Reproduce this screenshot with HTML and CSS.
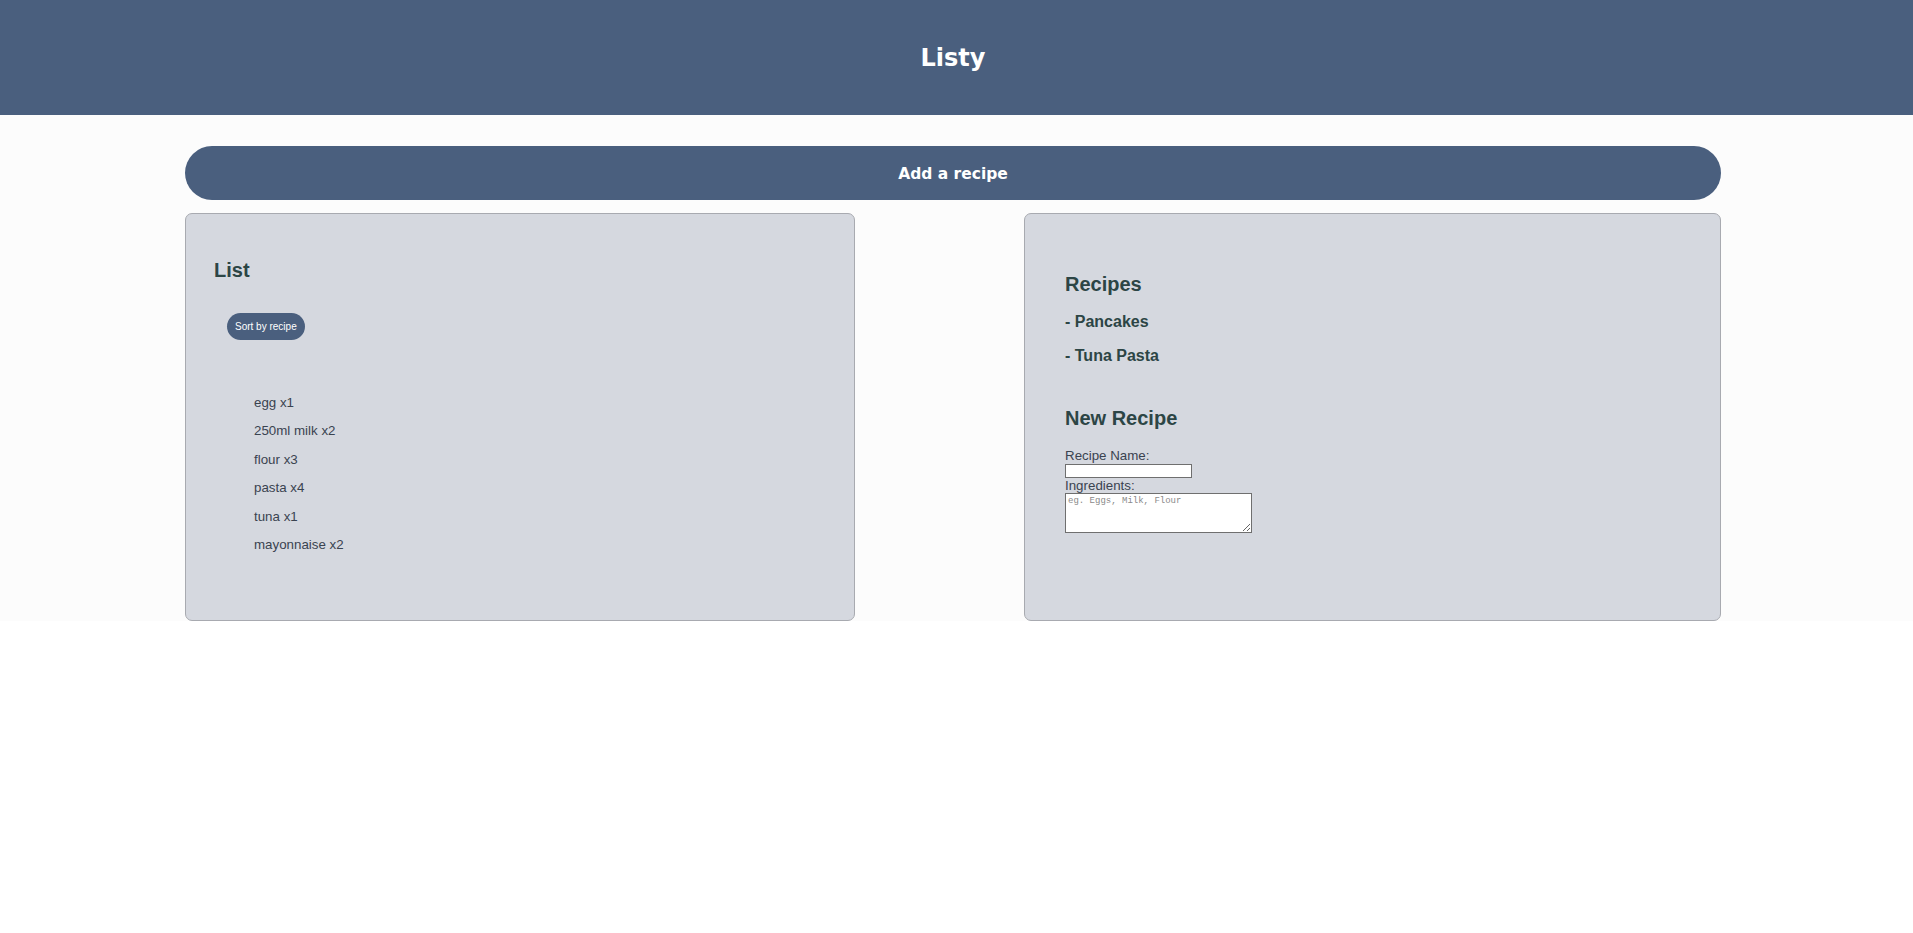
FILE: index.html
```html
<!DOCTYPE html>
<html lang="en">
<head>
<meta charset="utf-8">
<title>Listy</title>
<link rel="stylesheet" href="styles.css">
</head>
<body>
<header class="site-header">
  <h1 class="site-title">Listy</h1>
</header>
<main class="main">
  <div class="wrap">
    <button class="add-btn" type="button">Add a recipe</button>
    <div class="panels">
      <section class="panel panel-list">
        <h2 class="panel-title">List</h2>
        <button class="sort-btn" type="button">Sort by recipe</button>
        <ul class="items">
          <li>egg x1</li>
          <li>250ml milk x2</li>
          <li>flour x3</li>
          <li>pasta x4</li>
          <li>tuna x1</li>
          <li>mayonnaise x2</li>
        </ul>
      </section>
      <section class="panel panel-recipes">
        <h2 class="panel-title">Recipes</h2>
        <div class="recipes">
          <div class="recipe">- Pancakes</div>
          <div class="recipe">- Tuna Pasta</div>
        </div>
        <h2 class="panel-title new-title">New Recipe</h2>
        <form class="new-form">
          <label class="field-label" for="rname">Recipe Name:</label>
          <input class="field-input" id="rname" type="text">
          <label class="field-label" for="ring">Ingredients:</label>
          <textarea class="field-area" id="ring" placeholder="eg. Eggs, Milk, Flour"></textarea>
        </form>
      </section>
    </div>
  </div>
</main>
</body>
</html>
```
FILE: styles.css
```css
html, body {
  margin: 0;
  padding: 0;
  background: #ffffff;
  font-family: "Liberation Sans", Arial, sans-serif;
}

.site-header {
  height: 115px;
  background: #4a5f7e;
  display: flex;
  align-items: center;
  justify-content: center;
  padding-right: 7px;
}

.site-title {
  margin: 0;
  color: #ffffff;
  font-family: "DejaVu Sans", sans-serif;
  font-weight: bold;
  font-size: 24px;
}

.main {
  background: #fcfcfc;
  padding-top: 31px;
}

.wrap {
  margin-left: 185px;
  width: 1536px;
}

.add-btn {
  display: block;
  width: 100%;
  height: 54px;
  border: none;
  border-radius: 27px;
  background: #4a5f7e;
  color: #ffffff;
  font-family: "DejaVu Sans", sans-serif;
  font-weight: bold;
  font-size: 15.5px;
  padding: 2px 0 0 0;
  cursor: pointer;
}

.panels {
  display: flex;
  justify-content: space-between;
  margin-top: 13px;
}

.panel {
  box-sizing: border-box;
  height: 408px;
  background: #d5d8df;
  border: 1px solid #a8aab0;
  border-radius: 7px;
}

.panel-list {
  width: 670px;
  padding: 45px 28px 0 28px;
}

.panel-recipes {
  width: 697px;
  padding: 59px 40px 0 40px;
}

.panel-title {
  margin: 0;
  font-size: 20px;
  line-height: 23px;
  font-weight: bold;
  color: #2c4545;
}

.sort-btn {
  display: block;
  margin: 31px 0 0 13px;
  height: 27px;
  padding: 0 8px;
  border: none;
  border-radius: 14px;
  background: #4a5f7e;
  color: #ffffff;
  font-family: "Liberation Sans", Arial, sans-serif;
  font-size: 10px;
}

.items {
  list-style: none;
  margin: 48.5px 0 0 0;
  padding-left: 40px;
  font-size: 13.33px;
  line-height: 28.6px;
  color: #3a4350;
}

.recipes {
  margin-top: 17px;
}

.recipe {
  font-size: 16px;
  line-height: 18.4px;
  font-weight: bold;
  color: #2c4545;
  margin-bottom: 15.9px;
}

.new-title {
  margin-top: 41px;
}

.new-form {
  margin-top: 18.6px;
  display: flex;
  flex-direction: column;
  align-items: flex-start;
}

.field-label {
  font-size: 13.33px;
  line-height: 15.33px;
  color: #3a4350;
}

.field-input {
  box-sizing: border-box;
  width: 127px;
  height: 14px;
  margin: 0;
  padding: 0 2px;
  border: 1px solid #6f6f6f;
  background: #ffffff;
  font-size: 10px;
}

.field-area {
  box-sizing: border-box;
  width: 187px;
  height: 40px;
  margin: 0;
  padding: 2px;
  border: 1px solid #6f6f6f;
  background: #ffffff;
  font-family: "Liberation Mono", "DejaVu Sans Mono", monospace;
  font-size: 9px;
  resize: both;
}

.field-area::placeholder {
  color: #8a8a8a;
}
```
